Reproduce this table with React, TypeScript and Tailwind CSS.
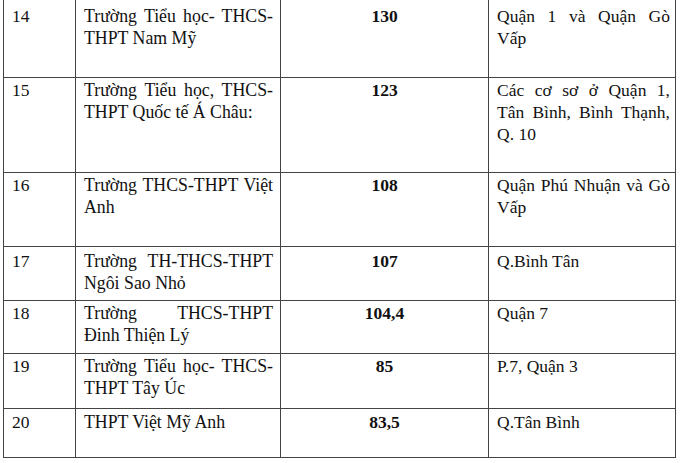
import React from "react";

type Row = {
  no: string;
  name: string[];
  score: string;
  place: string[];
  h: string;
  pt: string;
};

const rows: Row[] = [
  {
    no: "14",
    name: ["Trường Tiểu học- THCS-", "THPT Nam Mỹ"],
    score: "130",
    place: ["Quận 1 và Quận Gò", "Vấp"],
    h: "h-[78px]",
    pt: "pt-[5px]",
  },
  {
    no: "15",
    name: ["Trường Tiểu học, THCS-", "THPT Quốc tế Á Châu:"],
    score: "123",
    place: ["Các cơ sơ ở Quận 1,", "Tân Bình, Bình Thạnh,", "Q. 10"],
    h: "h-[95px]",
    pt: "pt-[1px]",
  },
  {
    no: "16",
    name: ["Trường THCS-THPT Việt", "Anh"],
    score: "108",
    place: ["Quận Phú Nhuận và Gò", "Vấp"],
    h: "h-[74px]",
    pt: "pt-[1px]",
  },
  {
    no: "17",
    name: ["Trường TH-THCS-THPT", "Ngôi Sao Nhỏ"],
    score: "107",
    place: ["Q.Bình Tân"],
    h: "h-[54px]",
    pt: "pt-[3px]",
  },
  {
    no: "18",
    name: ["Trường THCS-THPT", "Đinh Thiện Lý"],
    score: "104,4",
    place: ["Quận 7"],
    h: "h-[53px]",
    pt: "pt-[1px]",
  },
  {
    no: "19",
    name: ["Trường Tiểu học- THCS-", "THPT Tây Úc"],
    score: "85",
    place: ["P.7, Quận 3"],
    h: "h-[55px]",
    pt: "pt-[1px]",
  },
  {
    no: "20",
    name: ["THPT Việt Mỹ Anh"],
    score: "83,5",
    place: ["Q.Tân Bình"],
    h: "h-[49px]",
    pt: "pt-[2px]",
  },
];

function Lines({ lines }: { lines: string[] }) {
  return (
    <>
      {lines.map((l, i) =>
        i < lines.length - 1 ? (
          <div key={i} className="text-justify [text-align-last:justify]">
            {l}
          </div>
        ) : (
          <div key={i} className="text-left">
            {l}
          </div>
        )
      )}
    </>
  );
}

export default function App() {
  return (
    <div className="w-[680px] h-[463px] bg-white overflow-hidden pl-[3px] text-[17.5px] leading-[22px] text-[#111] font-['Liberation_Serif','Times_New_Roman',serif]">
      <div className="w-[673px] flex flex-col border-l border-r border-[#444]">
        {rows.map((r) => (
          <div key={r.no} className={`flex border-b border-[#444] ${r.h}`}>
            <div className={`w-[72px] shrink-0 border-r border-[#444] pl-[8px] ${r.pt}`}>
              {r.no}
            </div>
            <div className={`w-[205px] shrink-0 border-r border-[#444] pl-[8px] pr-[7px] text-[17.8px] ${r.pt}`}>
              <Lines lines={r.name} />
            </div>
            <div className={`w-[208px] shrink-0 border-r border-[#444] text-center font-bold ${r.pt}`}>
              {r.score}
            </div>
            <div className={`flex-1 pl-[8px] pr-[5px] ${r.pt}`}>
              <Lines lines={r.place} />
            </div>
          </div>
        ))}
      </div>
    </div>
  );
}
